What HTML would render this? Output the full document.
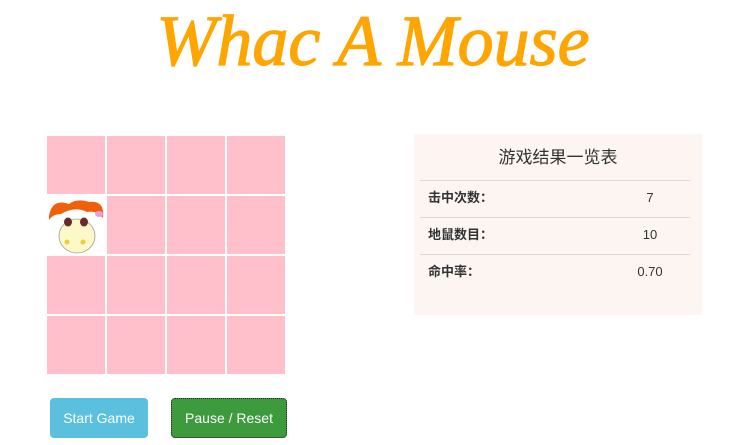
<!DOCTYPE html>
<html><head><meta charset="utf-8"><style>
body{margin:0;width:746px;height:445px;background:#fff;position:relative;overflow:hidden;font-family:"Liberation Sans","Noto Sans CJK SC",sans-serif}
.t{position:absolute;left:0;width:746px;top:-2px;text-align:center;color:#ffa500;font:italic 72px/86px "Liberation Serif",serif;-webkit-text-stroke:1.2px #ffa500}
.c{position:absolute;width:58px;height:58px;background:#ffc0cb}
.p{position:absolute;left:414px;top:134px;width:288px;height:181px;background:#fcf5f1}
.p h{display:block;text-align:center;font-size:17px;line-height:22px;color:#333;margin-top:13px;height:33px}
.r{border-top:1px solid #e0d8d4;height:36px;position:relative;margin:0 12px 0 6px;font-size:13px;color:#333}
.r b{position:absolute;left:8px;top:0;line-height:34px}
.r span{position:absolute;left:210px;width:40px;text-align:center;top:0;line-height:34px}
.b{position:absolute;top:398px;height:40px;border-radius:4px;color:#fff;font-size:14px;line-height:40px;text-align:center}
</style></head><body>
<div class="t">Whac A Mouse</div>
<div class="c" style="left:47px;top:136px"></div><div class="c" style="left:107px;top:136px"></div><div class="c" style="left:167px;top:136px"></div><div class="c" style="left:227px;top:136px"></div>
<div class="c" style="left:47px;top:196px;background:#fff">
<svg width="58" height="58" viewBox="0 0 58 58"><ellipse cx="30" cy="40" rx="18" ry="17" fill="#fdf8c8" stroke="#999" stroke-width=".8"/><path d="M2 20 Q5 2 22 8 Q30 2 42 6 Q58 4 56 22 Q50 14 40 16 Q28 10 14 18 Q6 18 2 24Z" fill="#f0600a"/><ellipse cx="21" cy="26" rx="4" ry="4.5" fill="#6a2a2a"/><ellipse cx="37" cy="26" rx="4" ry="4.5" fill="#6a2a2a"/><circle cx="20" cy="46" r="2.5" fill="#e8d030"/><circle cx="36" cy="46" r="2.5" fill="#e8d030"/><ellipse cx="52" cy="18" rx="4" ry="3" fill="#e8a0d8"/></svg></div>
<div class="c" style="left:107px;top:196px"></div><div class="c" style="left:167px;top:196px"></div><div class="c" style="left:227px;top:196px"></div>
<div class="c" style="left:47px;top:256px"></div><div class="c" style="left:107px;top:256px"></div><div class="c" style="left:167px;top:256px"></div><div class="c" style="left:227px;top:256px"></div>
<div class="c" style="left:47px;top:316px"></div><div class="c" style="left:107px;top:316px"></div><div class="c" style="left:167px;top:316px"></div><div class="c" style="left:227px;top:316px"></div>
<div class="p"><h>游戏结果一览表</h>
<div class="r"><b>击中次数：</b><span>7</span></div>
<div class="r"><b>地鼠数目：</b><span>10</span></div>
<div class="r"><b>命中率：</b><span>0.70</span></div></div>
<div class="b" style="left:50px;width:98px;background:#5bc0de">Start Game</div>
<div class="b" style="left:171px;width:114px;height:38px;line-height:38px;background:#3d9a3d;border:1px dotted #222">Pause / Reset</div>
</body></html>
